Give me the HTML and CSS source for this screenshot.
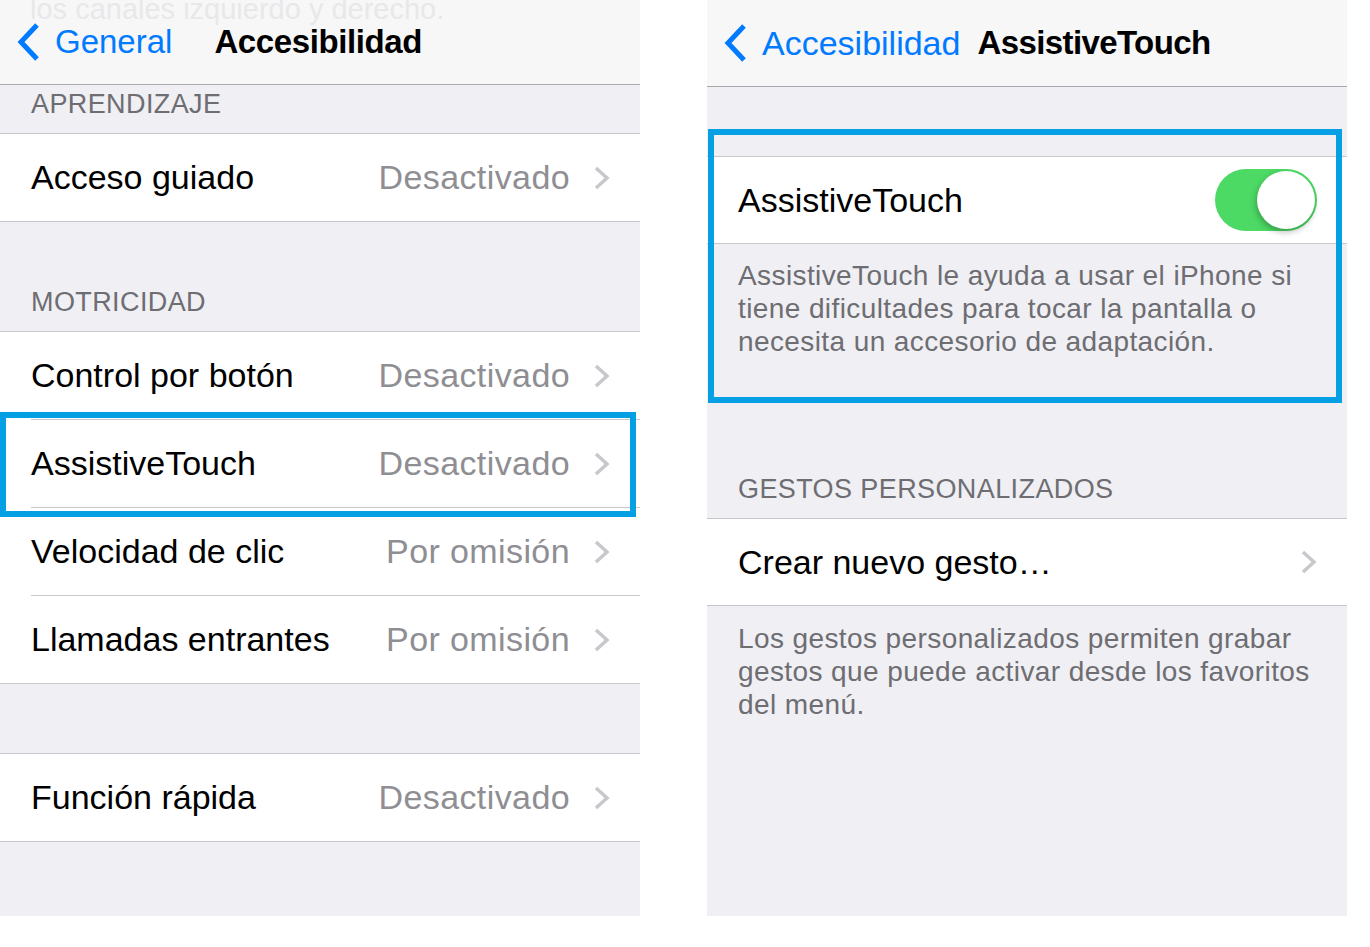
FILE: index.html
```html
<!DOCTYPE html>
<html>
	<head>
		<meta charset="utf-8" />
		<title>Accesibilidad - AssistiveTouch</title>
		<link rel="stylesheet" href="styles.css">
	</head>
	<body>

		<div class="page">

			<!-- pantalla izquierda -->
			<div class="screen">
				<div class="navbar navbar-left">
					<span class="ghost">los canales izquierdo y derecho.</span>
					<a class="back">
						<svg class="back-icon" width="26" height="40" viewBox="0 0 26 40"><polyline points="21,3 5,20 21,37" /></svg>
						<span class="back-text">General</span>
					</a>
					<span class="title title-left">Accesibilidad</span>
				</div>

				<div class="section-header first">APRENDIZAJE</div>
				<ul class="group">
					<li class="cell">
						<span class="label">Acceso guiado</span>
						<span class="value">Desactivado</span>
						<svg class="chevron" width="17" height="26" viewBox="0 0 17 26"><polyline points="3,3 14,13 3,23" /></svg>
					</li>
				</ul>

				<div class="section-header tall">MOTRICIDAD</div>
				<ul class="group">
					<li class="cell">
						<span class="label">Control por botón</span>
						<span class="value">Desactivado</span>
						<svg class="chevron" width="17" height="26" viewBox="0 0 17 26"><polyline points="3,3 14,13 3,23" /></svg>
					</li>
					<li class="cell">
						<span class="label">AssistiveTouch</span>
						<span class="value">Desactivado</span>
						<svg class="chevron" width="17" height="26" viewBox="0 0 17 26"><polyline points="3,3 14,13 3,23" /></svg>
					</li>
					<li class="cell">
						<span class="label">Velocidad de clic</span>
						<span class="value">Por omisión</span>
						<svg class="chevron" width="17" height="26" viewBox="0 0 17 26"><polyline points="3,3 14,13 3,23" /></svg>
					</li>
					<li class="cell">
						<span class="label">Llamadas entrantes</span>
						<span class="value">Por omisión</span>
						<svg class="chevron" width="17" height="26" viewBox="0 0 17 26"><polyline points="3,3 14,13 3,23" /></svg>
					</li>
				</ul>

				<ul class="group spaced">
					<li class="cell">
						<span class="label">Función rápida</span>
						<span class="value">Desactivado</span>
						<svg class="chevron" width="17" height="26" viewBox="0 0 17 26"><polyline points="3,3 14,13 3,23" /></svg>
					</li>
				</ul>

				<div class="highlight highlight-left"></div>
			</div>

			<!-- pantalla derecha -->
			<div class="screen">
				<div class="navbar navbar-right">
					<a class="back back-wide">
						<svg class="back-icon" width="26" height="40" viewBox="0 0 26 40"><polyline points="21,3 5,20 21,37" /></svg>
						<span class="back-text">Accesibilidad</span>
					</a>
					<span class="title title-right">AssistiveTouch</span>
				</div>

				<ul class="group spaced">
					<li class="cell cell-short">
						<span class="label">AssistiveTouch</span>
						<span class="switch on"><span class="knob"></span></span>
					</li>
				</ul>
				<div class="footer">AssistiveTouch le ayuda a usar el iPhone si tiene dificultades para tocar la pantalla o necesita un accesorio de adaptación.</div>

				<div class="section-header gestures">GESTOS PERSONALIZADOS</div>
				<ul class="group">
					<li class="cell cell-short">
						<span class="label">Crear nuevo gesto…</span>
						<svg class="chevron chevron-alone" width="17" height="26" viewBox="0 0 17 26"><polyline points="3,3 14,13 3,23" /></svg>
					</li>
				</ul>
				<div class="footer footer-second">Los gestos personalizados permiten grabar gestos que puede activar desde los favoritos del menú.</div>

				<div class="highlight highlight-right"></div>
			</div>

		</div>

	</body>
</html>
```

FILE: styles.css
```css
body {
	margin: 0;
	padding: 0;
	background-color: #fff;
	font-family: "Liberation Sans", Arial, sans-serif;
}

ul,
li {
	list-style: none;
	margin: 0;
	padding: 0;
}

.page {
	display: flex;
	gap: 67px;
	align-items: flex-start;
}

.screen {
	width: 640px;
	height: 916px;
	background-color: #efeff4;
	position: relative;
	overflow: hidden;
}

/* barra de navegación */
.navbar {
	position: relative;
	display: flex;
	align-items: center;
	background-color: #f7f7f7;
	border-bottom: 1px solid #a9a9ad;
	overflow: hidden;
	box-sizing: border-box;
	padding-left: 16px;
}

.navbar-left {
	height: 85px;
}

.navbar-right {
	height: 87px;
}

/* texto que pasa por detrás de la barra */
.ghost {
	position: absolute;
	left: 30px;
	top: -5px;
	font-size: 29px;
	line-height: 29px;
	color: #e8e8ea;
	white-space: nowrap;
}

.back {
	position: relative;
	display: flex;
	align-items: center;
	color: #007aff;
	font-size: 33px;
}

.back-wide {
	font-size: 34px;
}

.back-icon polyline {
	fill: none;
	stroke: #007aff;
	stroke-width: 5;
}

.back-text {
	margin-left: 13px;
}

.title {
	position: relative;
	font-weight: bold;
	color: #000;
}

.title-left {
	margin-left: 42px;
	font-size: 33px;
	letter-spacing: -0.4px;
}

.title-right {
	margin-left: 17px;
	font-size: 33px;
	letter-spacing: -0.6px;
}

/* secciones */
.section-header {
	font-size: 27px;
	line-height: 28px;
	color: #6d6d72;
	letter-spacing: 0.4px;
	padding: 5px 0 15px 31px;
}

.section-header.tall {
	padding-top: 66px;
}

.section-header.gestures {
	padding-top: 117px;
}

.group {
	background-color: #fff;
	border-top: 1px solid #c8c7cc;
	border-bottom: 1px solid #c8c7cc;
}

.group.spaced {
	margin-top: 69px;
}

.cell {
	position: relative;
	height: 87px;
	display: flex;
	align-items: center;
	padding: 0 30px 0 31px;
	font-size: 34px;
	color: #000;
}

.cell-short {
	height: 86px;
}

.cell + .cell {
	border-top: 1px solid #c8c7cc;
	margin-left: 31px;
	padding-left: 0;
}

.cell .value {
	margin-left: auto;
	color: #8e8e93;
	letter-spacing: 0.4px;
}

.chevron {
	margin-left: 23px;
}

.chevron polyline {
	fill: none;
	stroke: #c7c7cc;
	stroke-width: 3.5;
}

.chevron-alone {
	margin-left: auto;
}

/* interruptor */
.switch {
	margin-left: auto;
	position: relative;
	width: 102px;
	height: 62px;
	border-radius: 31px;
	background-color: #e5e5ea;
}

.switch.on {
	background-color: #4cd964;
}

.switch .knob {
	position: absolute;
	top: 2px;
	right: 2px;
	width: 58px;
	height: 58px;
	border-radius: 50%;
	background-color: #fff;
	box-shadow: -1px 3px 6px rgba(0, 0, 0, 0.28);
}

.footer {
	font-size: 28px;
	line-height: 33px;
	color: #6d6d72;
	letter-spacing: 0.4px;
	padding: 15px 20px 0 31px;
}

.footer-second {
	padding-top: 16px;
}

/* recuadros azules */
.highlight {
	position: absolute;
	border: 6px solid #05a0e3;
	box-sizing: border-box;
}

.highlight-left {
	left: 0;
	top: 412px;
	width: 636px;
	height: 105px;
}

.highlight-right {
	left: 1px;
	top: 129px;
	width: 634px;
	height: 274px;
}
```
